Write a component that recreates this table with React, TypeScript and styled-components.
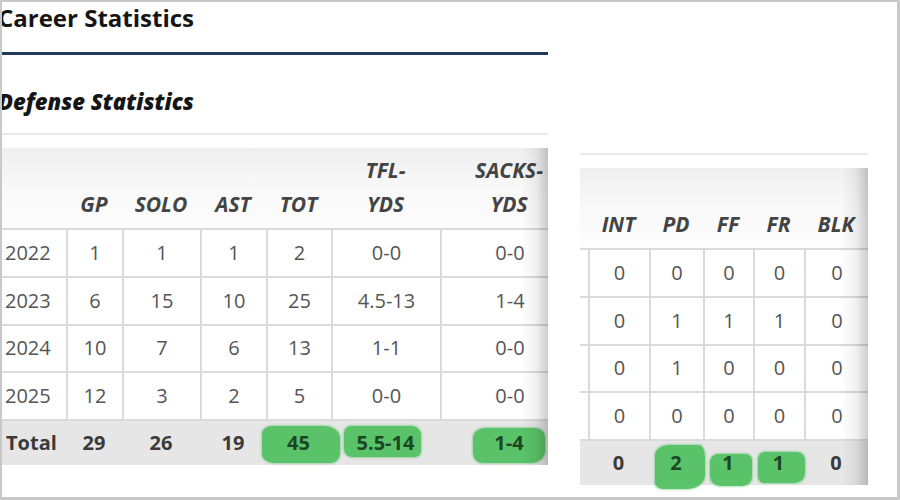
import React from "react";
import styled, { createGlobalStyle } from "styled-components";

type Column = {
  label: React.ReactNode;
  width: number;
  align?: "left" | "center";
};

type Mark = { l: number; r: number; t: number; b: number; radius: string };

type Props = {
  columns: Column[];
  rows: string[][];
  total: string[];
  marks?: Record<number, Mark>;
};

const GREEN = "rgba(74, 190, 90, 0.9)";

const leftColumns: Column[] = [
  { label: "", width: 64, align: "left" },
  { label: "GP", width: 56 },
  { label: "SOLO", width: 78 },
  { label: "AST", width: 66 },
  { label: "TOT", width: 65 },
  { label: <>TFL-<br />YDS</>, width: 109 },
  { label: <>SACKS-<br />YDS</>, width: 138 }
];

const leftRows = [
  ["2022", "1", "1", "1", "2", "0-0", "0-0"],
  ["2023", "6", "15", "10", "25", "4.5-13", "1-4"],
  ["2024", "10", "7", "6", "13", "1-1", "0-0"],
  ["2025", "12", "3", "2", "5", "0-0", "0-0"]
];

const leftTotal = ["Total", "29", "26", "19", "45", "5.5-14", "1-4"];

const rightColumns: Column[] = [
  { label: "", width: 8 },
  { label: "INT", width: 61 },
  { label: "PD", width: 54 },
  { label: "FF", width: 50 },
  { label: "FR", width: 51 },
  { label: "BLK", width: 64 }
];

const rightRows = [
  ["", "0", "0", "0", "0", "0"],
  ["", "0", "1", "1", "1", "0"],
  ["", "0", "1", "0", "0", "0"],
  ["", "0", "0", "0", "0", "0"]
];

const rightTotal = ["", "0", "2", "1", "1", "0"];

// marker strokes, measured from the text centre
const leftMarks: Record<number, Mark> = {
  4: { l: 37, r: 41, t: 17, b: 20, radius: "10px 16px 9px 12px / 8px 12px 10px 9px" },
  5: { l: 42, r: 36, t: 17, b: 14, radius: "7px 9px 6px 8px" },
  6: { l: 36, r: 36, t: 15, b: 20, radius: "12px 10px 14px 9px / 10px 9px 12px 10px" }
};

const rightMarks: Record<number, Mark> = {
  2: { l: 21, r: 29, t: 18, b: 26, radius: "14px 6px 18px 8px / 10px 12px 14px 6px" },
  3: { l: 18, r: 24, t: 9, b: 23, radius: "8px 6px 9px 10px" },
  4: { l: 21, r: 26, t: 11, b: 20, radius: "7px 8px 10px 6px" }
};

const StatTable = ({ columns, rows, total, marks = {} }: Props) => {
  const tableWidth = columns.reduce((sum, c) => sum + c.width, 0);

  return (
    <Viewport>
      <Table style={{ width: tableWidth }}>
        <colgroup>
          {columns.map((c, i) => (
            <col key={i} style={{ width: c.width }} />
          ))}
        </colgroup>
        <thead>
          <tr>
            {columns.map((c, i) => (
              <HeadCell key={i} $align={c.align ?? "center"}>
                {c.label}
              </HeadCell>
            ))}
          </tr>
        </thead>
        <tbody>
          {rows.map((row, r) => (
            <tr key={r}>
              {row.map((v, i) => (
                <Cell key={i} $align={columns[i].align ?? "center"}>
                  {v}
                </Cell>
              ))}
            </tr>
          ))}
          <tr>
            {total.map((v, i) => {
              const m = marks[i];
              return (
                <TotalCell key={i} $align={columns[i].align ?? "center"}>
                  {m ? (
                    <Highlight
                      $l={m.l}
                      $r={m.r}
                      $t={m.t}
                      $b={m.b}
                      $radius={m.radius}
                    >
                      {v}
                    </Highlight>
                  ) : (
                    v
                  )}
                </TotalCell>
              );
            })}
          </tr>
        </tbody>
      </Table>
    </Viewport>
  );
};

export default function App() {
  return (
    <>
      <GlobalStyle />
      <Frame>
        <LeftPanel>
          <Title>Career Statistics</Title>
          <NavyRule />
          <Subtitle>Defense Statistics</Subtitle>
          <Rule />
          <StatTable
            columns={leftColumns}
            rows={leftRows}
            total={leftTotal}
            marks={leftMarks}
          />
        </LeftPanel>
        <RightPanel>
          <Rule />
          <StatTable
            columns={rightColumns}
            rows={rightRows}
            total={rightTotal}
            marks={rightMarks}
          />
        </RightPanel>
      </Frame>
    </>
  );
}

const GlobalStyle = createGlobalStyle`
  html, body {
    margin: 0;
    padding: 0;
    background: #fff;
  }
  body {
    font-family: "Open Sans", "Noto Sans", "DejaVu Sans", sans-serif;
  }
`;

const Frame = styled.div`
  width: 900px;
  height: 500px;
  box-sizing: border-box;
  border: 2px solid #c9c9c9;
  border-right-width: 3px;
  border-bottom-width: 3px;
  display: flex;
  align-items: flex-start;
  overflow: hidden;
`;

const LeftPanel = styled.section`
  width: 546px;
  flex: 0 0 546px;
  display: flex;
  flex-direction: column;
  overflow: hidden;
`;

const RightPanel = styled.section`
  width: 288px;
  flex: 0 0 288px;
  margin-left: 32px;
  padding-top: 151px;
  display: flex;
  flex-direction: column;
`;

const Title = styled.h2`
  margin: 0 0 0 -4px;
  font-size: 24px;
  line-height: 32px;
  font-weight: 700;
  color: #151515;
  white-space: nowrap;
`;

const NavyRule = styled.div`
  height: 3px;
  margin-top: 18px;
  background: #1f3a5b;
`;

const Subtitle = styled.h3`
  margin: 32px 0 0 -4px;
  font-size: 22px;
  line-height: 28px;
  font-weight: 800;
  font-style: italic;
  color: #151515;
  white-space: nowrap;
`;

const Rule = styled.div`
  height: 2px;
  margin-top: 18px;
  background: #e9e9e9;

  ${RightPanel} > & {
    margin-top: 0;
  }
`;

const Viewport = styled.div`
  position: relative;
  margin-top: 13px;
  overflow: hidden;
  padding-bottom: 8px;

  &::after {
    content: "";
    position: absolute;
    top: 0;
    right: 0;
    bottom: 8px;
    width: 26px;
    pointer-events: none;
    background: linear-gradient(
      to right,
      rgba(0, 0, 0, 0),
      rgba(0, 0, 0, 0.06) 55%,
      rgba(0, 0, 0, 0.2)
    );
  }
`;

const Table = styled.table`
  table-layout: fixed;
  border-collapse: separate;
  border-spacing: 0;
  background: #fff;

  thead tr {
    background: linear-gradient(#efefef, #f8f8f8 45%, #fdfdfd);
  }
`;

const HeadCell = styled.th<{ $align: string }>`
  height: 82px;
  padding: 0 0 7px;
  box-sizing: border-box;
  vertical-align: bottom;
  text-align: ${(p) => p.$align};
  font-size: 21px;
  line-height: 34px;
  font-weight: 700;
  font-style: italic;
  color: #444;
  border-bottom: 2px solid #dadada;
  white-space: nowrap;
`;

const Cell = styled.td<{ $align: string }>`
  height: 47.75px;
  padding: ${(p) => (p.$align === "left" ? "0 0 0 3px" : "0")};
  box-sizing: border-box;
  text-align: ${(p) => p.$align};
  vertical-align: middle;
  font-size: 20px;
  line-height: 24px;
  color: #555;
  border-bottom: 2px solid #dadada;
  white-space: nowrap;

  & + & {
    border-left: 2px solid #dadada;
  }
`;

const TotalCell = styled.td<{ $align: string }>`
  height: 44px;
  padding: ${(p) => (p.$align === "left" ? "0 0 0 4px" : "0")};
  box-sizing: border-box;
  text-align: ${(p) => p.$align};
  vertical-align: middle;
  background: #e6e6e6;
  font-size: 20px;
  line-height: 24px;
  font-weight: 700;
  color: #3a3a3a;
  white-space: nowrap;
`;

const Highlight = styled.span<{
  $l: number;
  $r: number;
  $t: number;
  $b: number;
  $radius: string;
}>`
  position: relative;
  display: inline-block;
  isolation: isolate;
  color: #1b4725;

  &::before {
    content: "";
    position: absolute;
    z-index: -1;
    left: calc(50% - ${(p) => p.$l}px);
    right: calc(50% - ${(p) => p.$r}px);
    top: calc(50% - ${(p) => p.$t}px);
    bottom: calc(50% - ${(p) => p.$b}px);
    background: ${GREEN};
    border-radius: ${(p) => p.$radius};
    box-shadow: 0 0 2px 1px rgba(74, 190, 90, 0.45);
  }
`;
